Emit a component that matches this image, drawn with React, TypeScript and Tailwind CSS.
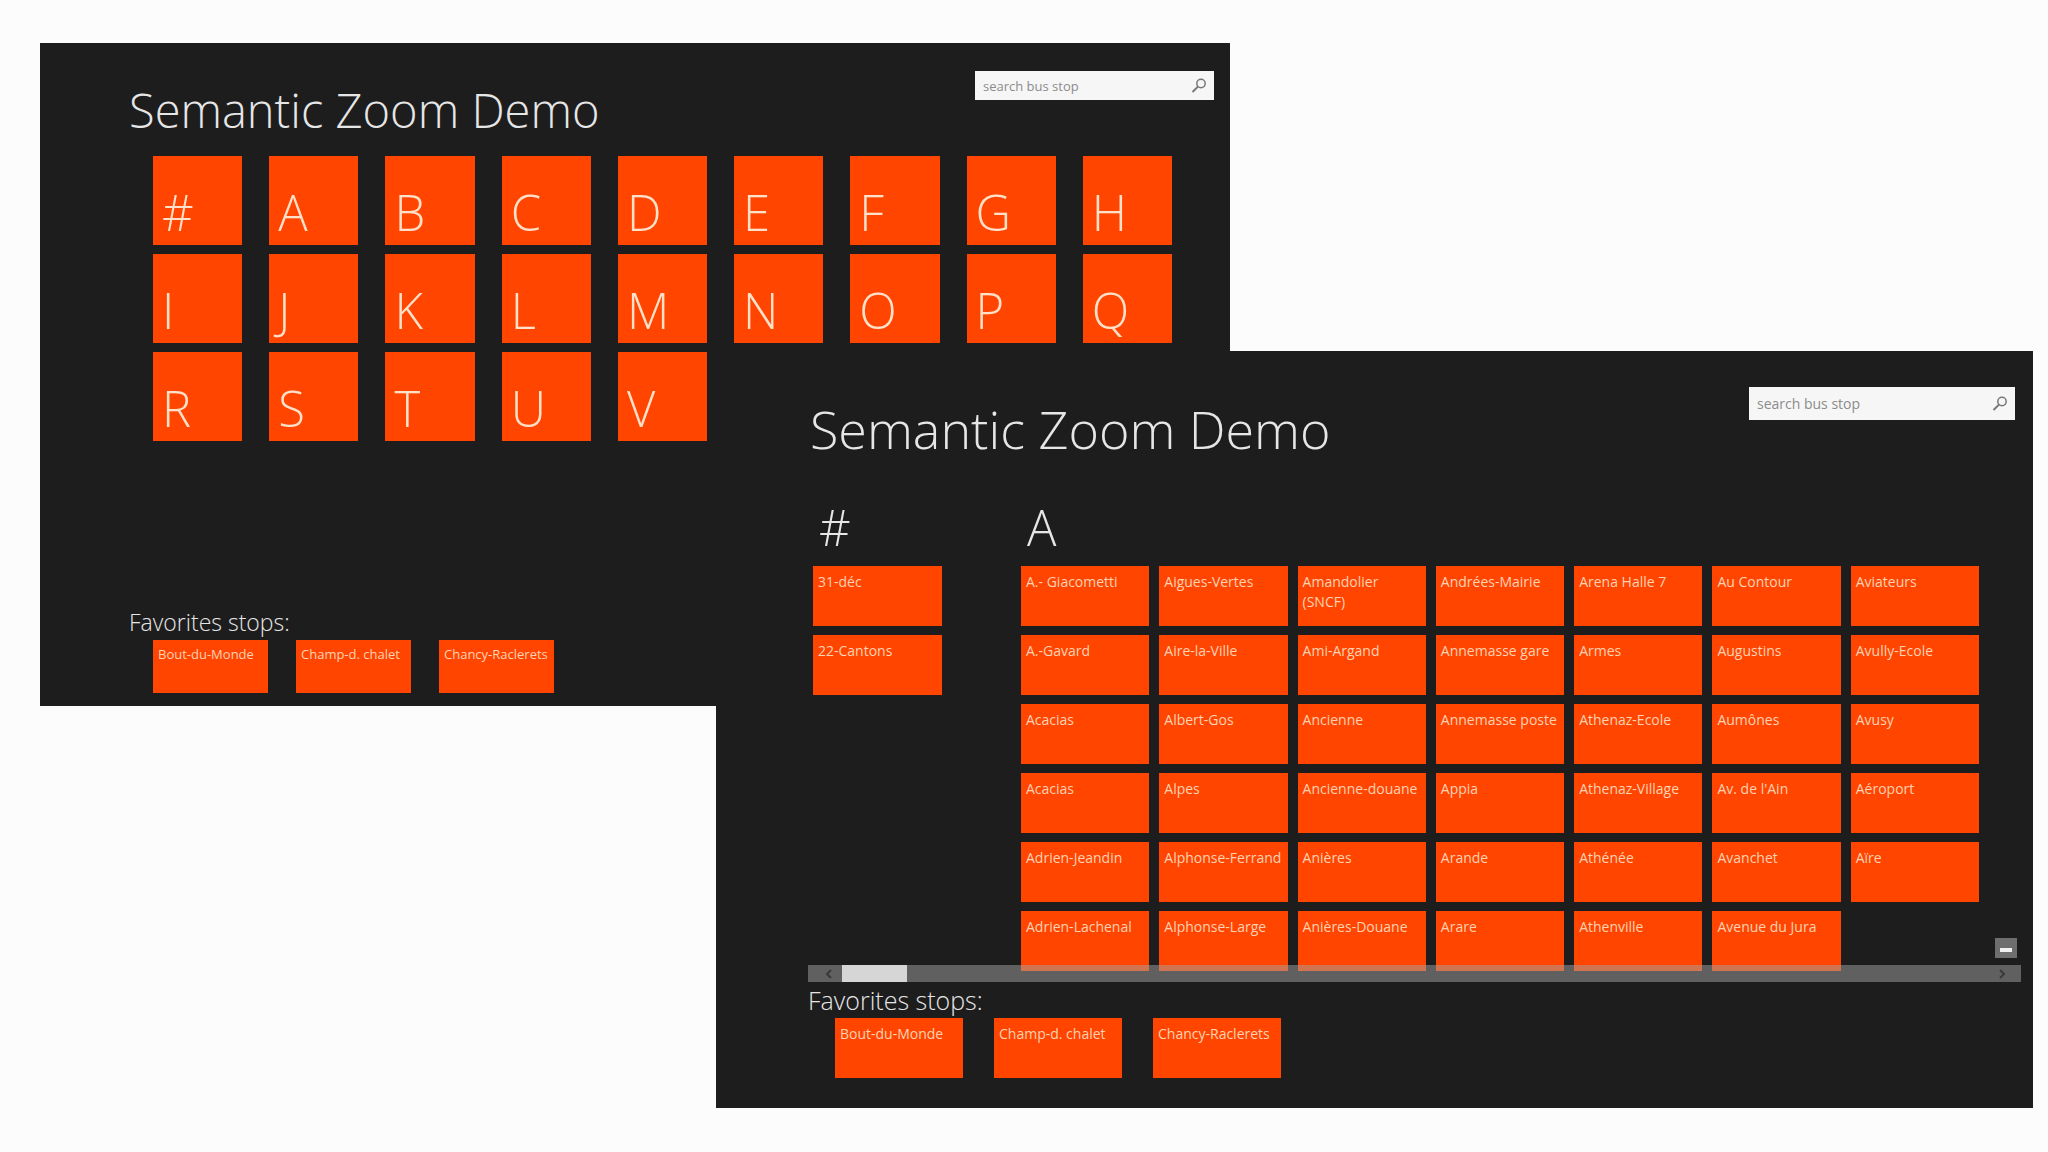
import type { ReactNode } from "react";
import clsx from "clsx";

// ============================================
// DATA
// ============================================

const letters = "#ABCDEFGHIJKLMNOPQRSTUV".split("");

const favorites = ["Bout-du-Monde", "Champ-d. chalet", "Chancy-Raclerets"];

const numberStops = ["31-déc", "22-Cantons"];

// one array per column, read top to bottom
const aStops = [
  ["A.- Giacometti", "A.-Gavard", "Acacias", "Acacias", "Adrien-Jeandin", "Adrien-Lachenal"],
  ["Aigues-Vertes", "Aire-la-Ville", "Albert-Gos", "Alpes", "Alphonse-Ferrand", "Alphonse-Large"],
  ["Amandolier (SNCF)", "Ami-Argand", "Ancienne", "Ancienne-douane", "Anières", "Anières-Douane"],
  ["Andrées-Mairie", "Annemasse gare", "Annemasse poste", "Appia", "Arande", "Arare"],
  ["Arena Halle 7", "Armes", "Athenaz-Ecole", "Athenaz-Village", "Athénée", "Athenville"],
  ["Au Contour", "Augustins", "Aumônes", "Av. de l'Ain", "Avanchet", "Avenue du Jura"],
  ["Aviateurs", "Avully-Ecole", "Avusy", "Aéroport", "Aïre"],
];

// ============================================
// PIECES
// ============================================

function SearchBox({ id, className }: { id: string; className: string }) {
  return (
    <form role="search" className={clsx("flex items-center bg-[#f6f6f6] pl-2 pr-[6px]", className)}>
      <input
        id={id}
        type="text"
        aria-label="Bus stop"
        placeholder="search bus stop"
        className="h-full min-w-0 flex-1 bg-transparent text-[#555] outline-none placeholder:text-[#8c8c8c]"
      />
      <button type="button" aria-label="Search">
        <svg viewBox="0 0 18 18" className="size-[18px]" fill="none" stroke="#777" strokeWidth="1.5">
          <circle cx="11" cy="6.5" r="4.2" />
          <path d="M8 9.6 2.5 15" strokeWidth="2" />
        </svg>
      </button>
    </form>
  );
}

function StopTile({ name, className }: { name: string; className: string }) {
  return (
    <button
      type="button"
      className={clsx("flex items-start bg-[#ff4500] px-[5px] text-left leading-5 text-[#ffd2b4]", className)}
    >
      {name}
    </button>
  );
}

function Window({ className, children }: { className: string; children: ReactNode }) {
  return <section className={clsx("bg-[#1e1d1e] text-[#e6e6e6]", className)}>{children}</section>;
}

// ============================================
// ZOOMED OUT
// ============================================

function LetterWindow() {
  return (
    <Window className="w-[calc(100%-803px)] min-w-[900px] pb-[13px]">
      <header className="flex items-start justify-between pt-7 pl-[89px] pr-4">
        <h1 className="pt-[7px] text-[47px] leading-[64px] font-light">Semantic Zoom Demo</h1>
        <SearchBox id="search-letters" className="h-[29px] w-[239px] text-[13px]" />
      </header>

      <div className="mt-[14px] grid grid-cols-9 gap-x-[27px] gap-y-[9px] pl-[113px] pr-[58px]">
        {letters.map((letter) => (
          <button
            key={letter}
            type="button"
            className="flex h-[89px] items-end bg-[#ff4500] pb-[3px] pl-[9px] text-[49px] leading-[60px] font-light text-[#ffe0c8]"
          >
            {letter}
          </button>
        ))}
      </div>

      <h2 className="mt-[163px] pl-[89px] text-[23px] leading-9 font-light">Favorites stops:</h2>
      <div className="flex gap-7 pl-[113px]">
        {favorites.map((name) => (
          <StopTile key={name} name={name} className="h-[53px] w-[115px] pt-1 text-[13px] whitespace-nowrap" />
        ))}
      </div>
    </Window>
  );
}

// ============================================
// ZOOMED IN
// ============================================

function ScrollBar() {
  return (
    <div className="relative -mt-[6px] flex h-[17px] items-center bg-[#a4a4a4]/50">
      <button type="button" aria-label="Scroll left" className="flex h-full w-[34px] items-center justify-center pl-2">
        <svg viewBox="0 0 10 10" className="size-[10px]" fill="none" stroke="#3a3a3a" strokeWidth="2">
          <path d="M7 1 3 5l4 4" />
        </svg>
      </button>
      <div className="h-full w-[65px] bg-[#d6d6d6]" />
      <button type="button" aria-label="Scroll right" className="ml-auto flex h-full w-[38px] items-center justify-center">
        <svg viewBox="0 0 10 10" className="size-[10px]" fill="none" stroke="#3a3a3a" strokeWidth="2">
          <path d="m3 1 4 4-4 4" />
        </svg>
      </button>
    </div>
  );
}

function StopsWindow() {
  return (
    <Window className="relative -mt-[355px] ml-auto w-[calc(100%-676px)] min-w-[1000px] pb-[30px] pl-[92px] pr-3">
      <header className="flex items-start justify-between pt-9 pr-[6px]">
        <h1 className="pt-[10px] pl-[2px] text-[52px] leading-[64px] font-light">Semantic Zoom Demo</h1>
        <SearchBox id="search-stops" className="h-[33px] w-[266px] text-sm" />
      </header>

      <div className="relative mt-8 flex gap-[79px] pl-[5px] pr-[42px]">
        <div className="w-[129px]">
          <h2 className="h-[73px] pl-[6px] text-[49px] leading-[68px] font-light">#</h2>
          <div className="flex flex-col gap-[9px]">
            {numberStops.map((name) => (
              <StopTile key={name} name={name} className="h-[60px] pt-[6px] text-sm" />
            ))}
          </div>
        </div>

        <div className="flex-1">
          <h2 className="h-[73px] pl-[6px] text-[49px] leading-[68px] font-light">A</h2>
          <div className="grid grid-cols-7 gap-[10px]">
            {aStops.map((column, i) => (
              <div key={i} className="flex flex-col gap-[9px]">
                {column.map((name, j) => (
                  <StopTile key={j} name={name} className="h-[60px] pt-[6px] text-sm" />
                ))}
              </div>
            ))}
          </div>
        </div>

        {/* zoom out button */}
        <button
          type="button"
          aria-label="Zoom out"
          className="absolute right-1 bottom-[13px] flex h-5 w-[22px] items-end justify-center bg-[#6e6e6e] pb-[6px]"
        >
          <span className="h-1 w-3 bg-[#f0f0f0]" />
        </button>
      </div>
      <ScrollBar />

      <h2 className="text-[25px] leading-9 font-light">Favorites stops:</h2>
      <div className="flex gap-[31px] pl-[27px]">
        {favorites.map((name) => (
          <StopTile key={name} name={name} className="h-[60px] w-32 pt-[6px] text-sm whitespace-nowrap" />
        ))}
      </div>
    </Window>
  );
}

export default function App() {
  return (
    <main className="min-h-screen bg-[#fcfcfd] pt-[43px] pr-[15px] pb-[44px] pl-10 font-['Open_Sans','Noto_Sans',sans-serif]">
      <LetterWindow />
      <StopsWindow />
    </main>
  );
}
